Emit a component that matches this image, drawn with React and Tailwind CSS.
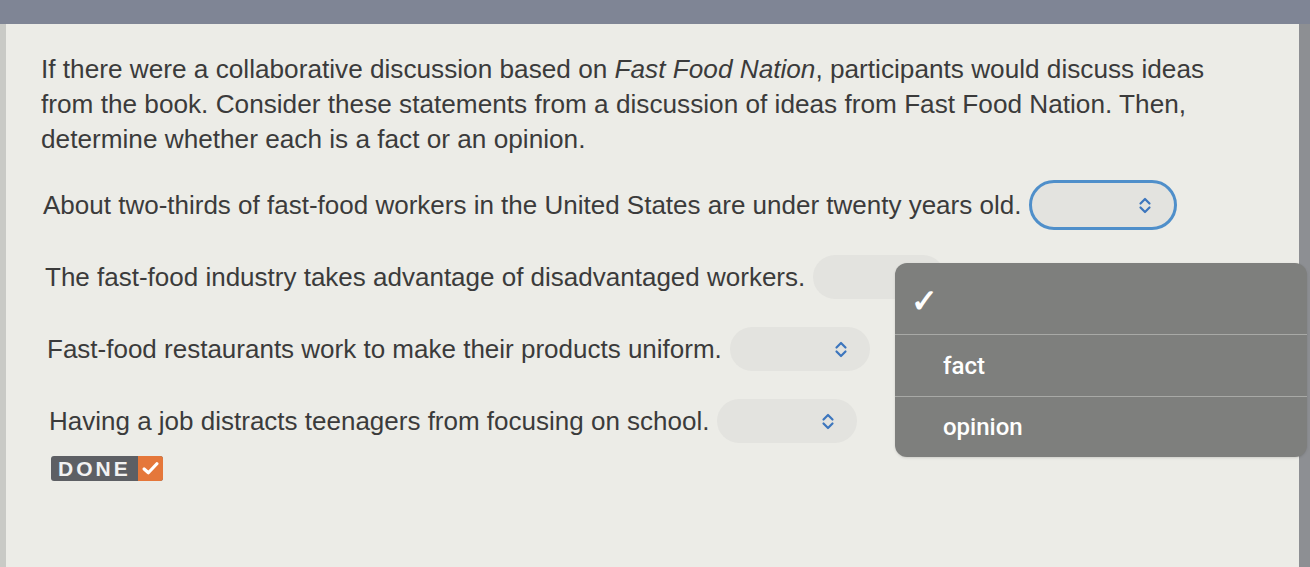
import React from 'react';

const statements = [
    { text: 'About two-thirds of fast-food workers in the United States are under twenty years old.', pad: 'pl-[37px]', width: 'w-[148px]', focused: true },
    { text: 'The fast-food industry takes advantage of disadvantaged workers.', pad: 'pl-[39px]', width: 'w-[132px]' },
    { text: 'Fast-food restaurants work to make their products uniform.', pad: 'pl-[41px]', width: 'w-[140px]' },
    { text: 'Having a job distracts teenagers from focusing on school.', pad: 'pl-[43px]', width: 'w-[140px]' },
];

const Chevrons = () => (
    <svg width="14" height="19" viewBox="0 0 14 19" fill="none" stroke="#3d76bd" strokeWidth="2.2" strokeLinecap="round" strokeLinejoin="round">
        <path d="M2.5 7.5 L7 3 L11.5 7.5" />
        <path d="M2.5 11.5 L7 16 L11.5 11.5" />
    </svg>
);

const SelectPill = ({ width, focused }) => (
    <div
        className={`${width} ml-[8px] shrink-0 flex items-center justify-end pr-[22px] rounded-full bg-[#e3e3df] ${
            focused ? 'h-[50px] border-[3px] border-[#4f8fca]' : 'h-[44px]'
        }`}
    >
        <Chevrons />
    </div>
);

const DoneButton = () => (
    <div className="inline-flex items-center h-[25px] rounded-[3px] bg-[#5d5f64] overflow-hidden">
        <span className="pl-[7px] pr-[7px] text-[21px] leading-none font-bold tracking-[3px] text-[#f2f2f2]">DONE</span>
        <span className="w-[25px] h-[25px] flex items-center justify-center bg-[#e5773a]">
            <svg width="17" height="15" viewBox="0 0 16 14" fill="none" stroke="#fff" strokeWidth="3" strokeLinecap="round" strokeLinejoin="round">
                <path d="M2 7.5 L6 11 L14 2.5" />
            </svg>
        </span>
    </div>
);

const OptionsMenu = () => (
    <div className="absolute left-[895px] top-[263px] w-[412px] h-[194px] rounded-[12px] bg-[#7e7f7d] flex flex-col text-white font-['Roboto',sans-serif] font-medium text-[24px] shadow-sm">
        <div className="h-[72px] flex items-center pl-[16px] pt-[4px] border-b border-[#a8a9a6]">
            <span className="text-[32px] font-bold leading-none">✓</span>
        </div>
        <div className="h-[62px] flex items-center pl-[48px] border-b border-[#a8a9a6]">fact</div>
        <div className="flex-1 flex items-center pl-[48px]">opinion</div>
    </div>
);

export default function App() {
    return (
        <div className="relative w-[1310px] h-[567px] overflow-hidden bg-[#e9e9e4] font-['Liberation_Sans',Arial,sans-serif] text-[#3b3b3b]">
            <div className="h-[24px] bg-[#7f8595]" />
            <div className="h-[543px] flex border-l-[6px] border-[#c9cac6] border-r-[11px] border-r-[#8d8f93] bg-[#ecece7]">
                <div className="flex-1 flex flex-col pt-[28px]">
                    <p className="pl-[35px] text-[26.2px] leading-[35px] whitespace-nowrap">
                        If there were a collaborative discussion based on <i>Fast Food Nation</i>, participants would discuss ideas
                        <br />
                        from the book. Consider these statements from a discussion of ideas from Fast Food Nation. Then,
                        <br />
                        determine whether each is a fact or an opinion.
                    </p>
                    <div className="mt-[12px] flex flex-col">
                        {statements.map((s) => (
                            <div key={s.text} className={`h-[72px] flex items-center ${s.pad} text-[26px] whitespace-nowrap`}>
                                <span>{s.text}</span>
                                <SelectPill width={s.width} focused={s.focused} />
                            </div>
                        ))}
                    </div>
                    <div className="pl-[45px] mt-[-1px]">
                        <DoneButton />
                    </div>
                </div>
            </div>
            <OptionsMenu />
        </div>
    );
}
